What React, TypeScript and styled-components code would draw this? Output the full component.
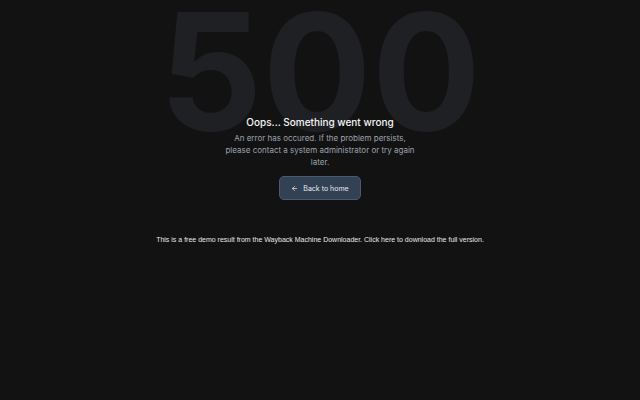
import React from 'react';
import styled, { createGlobalStyle } from 'styled-components';

const GlobalStyle = createGlobalStyle`
  html, body {
    margin: 0;
    padding: 0;
    background: #121212;
  }
  body {
    font-family: Inter, "Noto Sans", sans-serif;
    color: #f4f4f5;
  }
`;

const Page = styled.div`
  width: 640px;
  height: 400px;
  overflow: hidden;
  display: flex;
  flex-direction: column;
  align-items: center;
`;

const ErrorBlock = styled.div`
  display: flex;
  flex-direction: column;
  align-items: center;
  text-align: center;
`;

const BigCode = styled.div`
  font-size: 162px;
  font-weight: 700;
  line-height: 162px;
  height: 162px;
  color: #1f2023;
  margin-top: -10px;
  margin-bottom: -37px;
  user-select: none;
`;

const Title = styled.h1`
  position: relative;
  margin: 0;
  font-size: 10px;
  font-weight: 500;
  color: #f5f5f5;
  line-height: 14px;
`;

const Message = styled.p`
  position: relative;
  margin: 3px 0 0;
  width: 194px;
  font-size: 8px;
  line-height: 12px;
  color: #9ca3af;
`;

const HomeButton = styled.button`
  margin-top: 8px;
  display: flex;
  align-items: center;
  gap: 5px;
  height: 24px;
  padding: 0 11px;
  border-radius: 5px;
  border: 1px solid #4b5a70;
  background: #334155;
  color: #e5e7eb;
  font-family: Inter, sans-serif;
  font-size: 7px;
  cursor: pointer;
`;

const Notice = styled.div`
  margin-top: 35px;
  font-family: "Liberation Sans", Arial, sans-serif;
  font-size: 7px;
  line-height: 9px;
  color: #e8e8e8;
`;

const ArrowLeft = () => (
  <svg width="7" height="7" viewBox="0 0 24 24" fill="none" stroke="currentColor" strokeWidth="2.5" strokeLinecap="round" strokeLinejoin="round">
    <path d="M19 12H5" />
    <path d="M12 19l-7-7 7-7" />
  </svg>
);

export default function App() {
  return (
    <Page>
      <GlobalStyle />
      <ErrorBlock>
        <BigCode>500</BigCode>
        <Title>Oops... Something went wrong</Title>
        <Message>
          An error has occured. If the problem persists, please contact a system administrator or try again later.
        </Message>
        <HomeButton>
          <ArrowLeft />
          Back to home
        </HomeButton>
      </ErrorBlock>
      <Notice>
        This is a free demo result from the Wayback Machine Downloader. Click here to download the full version.
      </Notice>
    </Page>
  );
}
